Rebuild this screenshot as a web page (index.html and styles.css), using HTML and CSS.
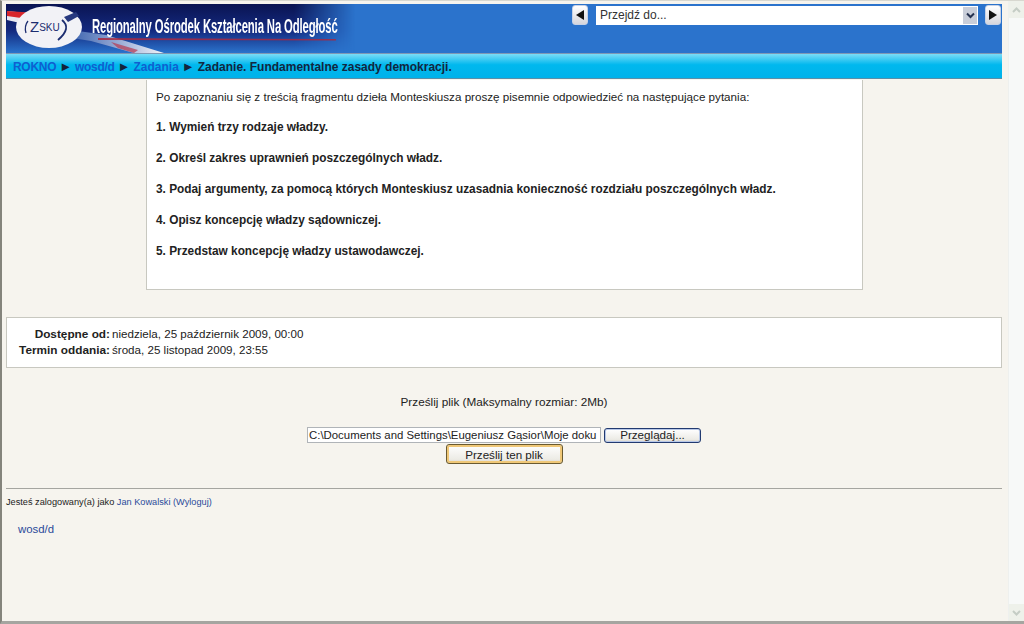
FILE: index.html
```html
<!DOCTYPE html>
<html lang="pl">
<head>
<meta charset="utf-8">
<title>Zadanie</title>
<link rel="stylesheet" href="styles.css">
</head>
<body>
<div class="window">
  <div class="page">
    <header class="header">
      <svg class="banner-art" width="360" height="49" viewBox="0 0 360 49" aria-hidden="true">
        <defs>
          <linearGradient id="darkv" x1="0" x2="0" y1="0" y2="1">
            <stop offset="0" stop-color="#0a1452"/>
            <stop offset="0.55" stop-color="#142a80"/>
            <stop offset="1" stop-color="#2b73cc"/>
          </linearGradient>
          <linearGradient id="fadeh" x1="0" x2="1" y1="0" y2="0">
            <stop offset="0" stop-color="#fff"/>
            <stop offset="0.8" stop-color="#fff"/>
            <stop offset="0.97" stop-color="#000"/>
          </linearGradient>
          <mask id="fade"><rect width="360" height="49" fill="url(#fadeh)"/></mask>
          <linearGradient id="swoosh" x1="0" x2="1" y1="0" y2="0">
            <stop offset="0" stop-color="#3f66b0"/>
            <stop offset="0.6" stop-color="#a9b8dc"/>
            <stop offset="1" stop-color="#f4f4f8"/>
          </linearGradient>
        </defs>
        <rect width="360" height="49" fill="url(#darkv)" mask="url(#fade)"/>
        <path d="M72 27 L100 31 L158 49 L128 49 L85 37 L66 34 Z" fill="url(#swoosh)"/>
        <path d="M92 34 L330 35 L330 36.500 L92 36 Z" fill="#a8283f" opacity=".85"/>
        <path d="M105 38 L132 46 L128 49 L112 44 Z" fill="#b8384f" opacity=".7"/>
        <path d="M1 7 L20 9 L14 19 L1 16 Z" fill="#e8e8f0"/>
        <path d="M1 7 L30 9 L22 15 L1 12 Z" fill="#d8262c"/>
        <ellipse cx="43" cy="23" rx="33" ry="21" fill="#f2f2f6"/>
        <path d="M58 13 L70 8 L73 12 L62 18 Z" fill="#27397f"/>
        <path d="M56 16 Q66 24 52 36" fill="none" stroke="#1c2d70" stroke-width="1.800"/>
        <path d="M22 17 Q18 22 20 29" fill="none" stroke="#1c2d70" stroke-width="1.300"/>
      </svg>
      <div class="logo-text"><span class="logo-z">Z</span><span class="logo-s">SKU</span></div>
      <div class="site-title">Regionalny Ośrodek Kształcenia Na Odległość</div>
      <div class="jump">
        <button class="arrow-btn" type="button"><span class="tri tri-left"></span></button>
        <div class="select">
          <span class="select-text">Przejdź do...</span>
          <span class="select-btn">
            <svg width="9" height="7" viewBox="0 0 9 7" aria-hidden="true"><path d="M1 1.500 L4.500 5 L8 1.500" fill="none" stroke="#26324f" stroke-width="2"/></svg>
          </span>
        </div>
        <button class="arrow-btn" type="button"><span class="tri tri-right"></span></button>
      </div>
    </header>
    <nav class="crumbs">
      <a class="crumb-link crumb-root">ROKNO</a><span class="sep">►</span><a class="crumb-link crumb-course">wosd/d</a><span class="sep">►</span><a class="crumb-link">Zadania</a><span class="sep">►</span><span>Zadanie. Fundamentalne zasady demokracji.</span>
    </nav>
    <section class="task">
      <p class="intro">Po zapoznaniu się z treścią fragmentu dzieła Monteskiusza proszę pisemnie odpowiedzieć na następujące pytania:</p>
      <p class="q">1. Wymień trzy rodzaje władzy.</p>
      <p class="q">2. Określ zakres uprawnień poszczególnych władz.</p>
      <p class="q">3. Podaj argumenty, za pomocą których Monteskiusz uzasadnia konieczność rozdziału poszczególnych władz.</p>
      <p class="q">4. Opisz koncepcję władzy sądowniczej.</p>
      <p class="q">5. Przedstaw koncepcję władzy ustawodawczej.</p>
    </section>
    <section class="dates">
      <div class="date-label">Dostępne od:</div><div class="date-value">niedziela, 25 październik 2009, 00:00</div>
      <div class="date-label">Termin oddania:</div><div class="date-value">środa, 25 listopad 2009, 23:55</div>
    </section>
    <section class="upload">
      <div class="upload-title">Prześlij plik (Maksymalny rozmiar: 2Mb)</div>
      <div class="file-row">
        <div class="file-input">C:\Documents and Settings\Eugeniusz Gąsior\Moje doku</div>
        <button class="xp-btn browse" type="button">Przeglądaj...</button>
      </div>
      <button class="xp-btn submit" type="button">Prześlij ten plik</button>
    </section>
    <hr class="rule">
    <div class="login">Jesteś zalogowany(a) jako <a class="foot-link">Jan Kowalski</a> <a class="foot-link">(Wyloguj)</a></div>
    <div class="course"><a class="foot-link">wosd/d</a></div>
  </div>
  <aside class="scrollbar">
    <span class="scroll-btn"><svg width="9" height="6" viewBox="0 0 9 6" aria-hidden="true"><path d="M1 5 L4.500 1.500 L8 5" fill="none" stroke="#c5cdc5" stroke-width="2"/></svg></span>
    <span class="scroll-btn"><svg width="9" height="6" viewBox="0 0 9 6" aria-hidden="true"><path d="M1 1 L4.500 4.500 L8 1" fill="none" stroke="#c5cdc5" stroke-width="2"/></svg></span>
  </aside>
</div>
</body>
</html>
```
FILE: styles.css
```css
* { box-sizing: border-box; }
html, body { margin: 0; padding: 0; height: 100%; overflow: hidden; }
body {
  font-family: "Liberation Sans", Arial, sans-serif;
  font-size: 11.65px;
  color: #222;
  background: #f6f4ee;
}
.window {
  display: flex;
  height: 624px;
  border-left: 2px solid #84847c;
  border-top: 1px solid #d8d8d0;
  border-bottom: 3px solid #a5a5a0;
}
.page { flex: 1; min-width: 0; padding: 3px 6px 0 4px; }
.scrollbar {
  width: 16px;
  background: #f7f9f8;
  display: flex;
  flex-direction: column;
  justify-content: space-between;
  border-left: 1px solid #eef0ee;
}
.scroll-btn {
  height: 17px;
  background: #eef1ea;
  display: flex;
  align-items: center;
  justify-content: center;
}
.header {
  position: relative;
  height: 50px;
  background: #2b73cc;
  display: flex;
  justify-content: flex-end;
  align-items: flex-start;
  border-bottom: 1px solid #7f98b4;
}
.banner-art { position: absolute; left: 0; top: 0; }
.logo-text {
  position: absolute;
  left: 24px;
  top: 13px;
  color: #1c2d70;
  line-height: 20px;
}
.logo-z { font-size: 15px; }
.logo-s { font-size: 10px; vertical-align: 1px; }
.site-title {
  position: absolute;
  left: 86px;
  top: 10px;
  color: #fff;
  font-size: 20px;
  line-height: 24px;
  font-weight: bold;
  letter-spacing: -.2px;
  transform: scaleX(.565);
  transform-origin: left center;
  white-space: nowrap;
}
.jump {
  position: relative;
  display: flex;
  align-items: center;
  gap: 7px;
  padding: 1px 1px 0 0;
}
.arrow-btn {
  width: 16px;
  height: 20px;
  padding: 0;
  border: 1px solid #c7d2e6;
  border-radius: 3px;
  background: linear-gradient(#fff, #d6d6dc);
  display: flex;
  align-items: center;
  justify-content: center;
}
.tri { width: 0; height: 0; border-top: 5px solid transparent; border-bottom: 5px solid transparent; }
.tri-left { border-right: 8px solid #111; }
.tri-right { border-left: 8px solid #111; }
.select {
  width: 382px;
  height: 19px;
  margin-left: 1px;
  background: #fff;
  display: flex;
  align-items: center;
  justify-content: space-between;
  padding: 0 1px 0 4px;
  font-size: 12px;
}
.select-text { color: #333; }
.select-btn {
  width: 14px;
  height: 17px;
  background: #c9ced9;
  display: flex;
  align-items: center;
  justify-content: center;
}
.crumbs {
  height: 25px;
  background: linear-gradient(#7adcf7, #00b8ee 45%, #00b2ea);
  border-bottom: 1px solid #5a8ea8;
  padding: 1px 7px 0;
  display: flex;
  align-items: center;
  font-size: 12px;
  font-weight: bold;
  color: #12263f;
  white-space: pre;
}
.sep { font-size: 13px; margin: 0 3px 0 3px; color: #14243c; }
.crumb-link { color: #0f5fd0; }
.crumb-root { letter-spacing: -.3px; }
.crumb-course { letter-spacing: -.3px; }
.task {
  width: 717px;
  height: 210px;
  margin: 1px 0 0 140px;
  padding: 1px 9px;
  background: #fff;
  border: 1px solid #c8c8c0;
  border-top: 0;
}
.task p { margin: 0; }
.intro { padding-top: 9px; height: 26px; line-height: 14px; }
.q { font-size: 11.85px; font-weight: bold; height: 31px; padding-top: 13px; line-height: 14px; }
.dates {
  margin-top: 27px;
  height: 51px;
  background: #fff;
  border: 1px solid #c8c8c0;
  display: grid;
  grid-template-columns: 103px 1fr;
  column-gap: 2px;
  align-content: start;
  padding: 8px 0 0 0;
  line-height: 16px;
}
.date-label { font-size: 11.8px; font-weight: bold; text-align: right; }
.date-value { font-size: 11.6px; }
.upload {
  display: flex;
  flex-direction: column;
  align-items: center;
  margin-top: 27px;
}
.upload-title { line-height: 14px; font-size: 11.75px; }
.file-row { display: flex; align-items: center; gap: 3px; margin-top: 18px; }
.file-input {
  width: 294px;
  height: 16px;
  background: #fff;
  border: 1px solid #b0b4b8;
  line-height: 14px;
  padding-left: 1px;
  overflow: hidden;
  white-space: nowrap;
  color: #222;
  font-size: 11.4px;
}
.xp-btn {
  font: inherit;
  color: #222;
  padding: 0;
  border-radius: 3px;
  background: linear-gradient(#fff, #ecebe5 80%, #d6d0c5);
}
.browse { width: 97px; height: 15px; line-height: 12px; border: 1px solid #223a70; box-shadow: inset 0 0 0 1px #b8c8e8; }
.submit { width: 117px; height: 20px; margin-top: 1px; border: 1px solid #6a5a30; box-shadow: inset 0 0 0 2px #f0c878; }
.rule { margin: 24px 0 0 0; border: 0; border-top: 1px solid #a5a5a0; height: 1px; }
.login { font-size: 9.2px; line-height: 12px; margin-top: 7px; color: #222; }
.foot-link { color: #2a4a9a; }
.course { margin: 14px 0 0 12px; line-height: 14px; font-size: 11.4px; }
```
